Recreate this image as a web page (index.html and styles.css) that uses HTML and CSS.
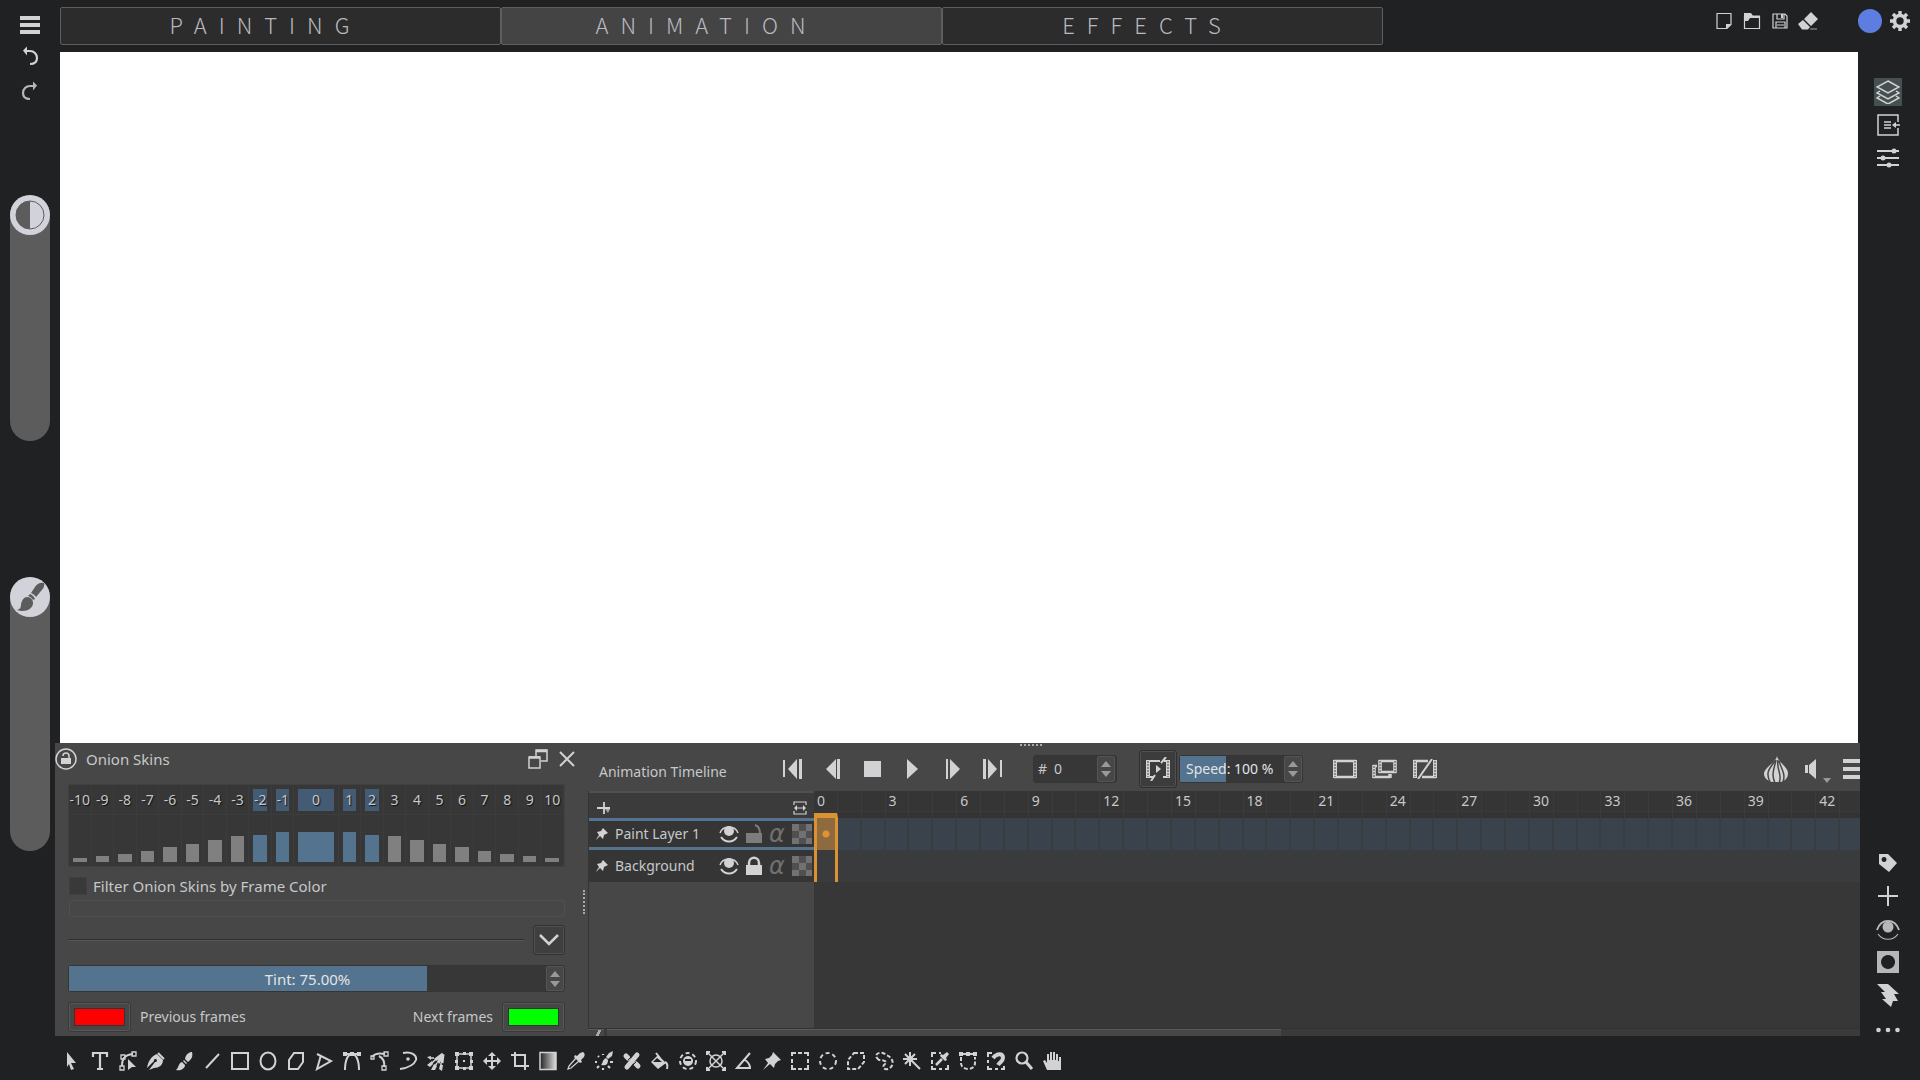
FILE: index.html
```html
<!DOCTYPE html>
<html lang="en">
<head>
    <meta charset="UTF-8">
    <meta name="viewport" content="width=device-width, initial-scale=1.0">
    <title>Animation Workspace</title>
    <link rel="stylesheet" href="styles.css">
</head>
<body>
<div class="app">

    <!-- Left rail: menu, history, opacity and size sliders -->
    <aside class="left-rail">
        <button class="icon-btn" aria-label="Menu">
            <svg viewBox="0 0 20 20"><path class="solid" d="M0 2h20v4H0zM0 9h20v4H0zM0 16h20v4H0z"/></svg>
        </button>
        <div class="history">
            <button class="icon-btn" aria-label="Undo">
                <svg viewBox="0 0 20 20"><path d="M6 5h4c4 0 7 3 7 7s-3 6-7 6" stroke-width="2.2"/><path class="solid" d="M3 4.500l4-4v9z"/></svg>
            </button>
            <button class="icon-btn dim" aria-label="Redo">
                <svg viewBox="0 0 20 20"><path d="M13 5h-3c-4 0-7 3-7 7s3 6 7 6" stroke-width="2.200"/><path class="solid" d="M17 4.500l-4-4v9z"/></svg>
            </button>
        </div>
        <div class="slider opacity">
            <input type="range" min="0" max="100" value="100" aria-label="Opacity">
            <svg viewBox="0 0 40 40"><circle cx="20" cy="20" r="14" fill="#d2d3da" stroke="#5c5c5c" stroke-width="1"/><path d="M20 6a14 14 0 0 0 0 28z" fill="#5c5c5c" stroke="none"/></svg>
        </div>
        <div class="slider size">
            <input type="range" min="0" max="100" value="100" aria-label="Brush size">
            <svg viewBox="0 0 40 40"><path d="M34 6c-4-1-7 1-9 4l-4 6c2 1 4 2 5 4l5-6c2-2 4-5 3-8z"/><path d="M20 17c3 1 4 3 5 5l-2 1c-1-2-2-3-5-4z"/><path d="M17 20c4 0 6 3 6 6 0 6-8 10-16 7 3-1 4-2 4-6 1-4 3-7 6-7z"/></svg>
        </div>
    </aside>

    <!-- Workspace tabs and document actions -->
    <header class="top-bar">
        <nav class="tabs">
            <button class="tab">PAINTING</button>
            <button class="tab active">ANIMATION</button>
            <button class="tab">EFFECTS</button>
        </nav>
        <div class="doc-actions">
            <button class="icon-btn" aria-label="New">
                <svg viewBox="0 0 20 20"><path d="M3 2.500h14v11l-4 4H3z" stroke-width="1.200"/><path class="solid" d="M12 18v-5h5z"/></svg>
            </button>
            <button class="icon-btn" aria-label="Open">
                <svg viewBox="0 0 20 20"><path d="M2.500 5v12.500h15V5z" stroke-width="1.200"/><path class="solid" d="M2 2h7l2 3h7v2H8l-2 3H2z"/></svg>
            </button>
            <button class="icon-btn" aria-label="Save">
                <svg viewBox="0 0 20 20" stroke-width="1.200"><path d="M3 3h12l2 2v12H3zM6 17v-6h9v6M7 3v5h7V3M7 14h7"/><path class="solid" d="M11 3h2v4h-2z"/></svg>
            </button>
            <button class="icon-btn" aria-label="Clear">
                <svg viewBox="0 0 20 20"><path class="solid" d="M13 1l7 7-7 7-7-7zM5 9l7 7-2 2.500H4L0 13z"/><path d="M12 18h7" stroke-width="1.500" opacity=".5"/></svg>
            </button>
        </div>
        <button class="color-dot" aria-label="Foreground color"></button>
        <button class="icon-btn" aria-label="Settings">
            <svg viewBox="0 0 20 20"><circle cx="10" cy="10" r="5.500" stroke-width="3.600"/><path d="M10 0v4M10 16v4M0 10h4M16 10h4M3 3l2.500 2.500M14.500 14.500L17 17M17 3l-2.500 2.500M5.500 14.500L3 17" stroke-width="3.400"/></svg>
        </button>
    </header>

    <main class="canvas"></main>

    <section class="dockers">
        <!-- Onion skins -->
        <div class="onion">
            <div class="docker-title">
                <button class="icon-btn lock" aria-label="Lock docker">
                    <svg viewBox="0 0 22 22"><circle cx="11" cy="11" r="10" stroke-width="1.500"/><path class="solid" d="M6 10h10v6H6z"/><path d="M8 8c0-4 6-4 6 0v2" stroke-width="1.500"/></svg>
                </button>
                <span class="title-text">Onion Skins</span>
                <button class="icon-btn" aria-label="Float docker">
                    <svg viewBox="0 0 20 20" stroke-width="1.500"><path d="M1 8h11v11H1zM8 7V1h11v11h-6"/><path d="M1 8.500h11M8 2h11" stroke-width="2.500"/></svg>
                </button>
                <button class="icon-btn" aria-label="Close docker">
                    <svg viewBox="0 0 20 20"><path d="M3 3l14 14M17 3L3 17" stroke-width="2"/></svg>
                </button>
            </div>
            <div class="skins" id="skins"></div>
            <label class="filter"><input type="checkbox">Filter Onion Skins by Frame Color</label>
            <div class="color-filter"></div>
            <div class="divider">
                <hr>
                <button class="fold" aria-label="Show tint options">
                    <svg viewBox="0 0 20 20"><path d="M1 5l9 9 9-9" stroke-width="2.500"/></svg>
                </button>
            </div>
            <div class="spin tint">
                <input type="text" value="Tint: 75.00%" aria-label="Tint">
                <span class="arrows"><button class="up" aria-label="More tint"></button><button class="down" aria-label="Less tint"></button></span>
            </div>
            <div class="swatches">
                <button class="swatch" id="prev" aria-label="Previous frames color"><span class="red"></span></button>
                <label for="prev">Previous frames</label>
                <label for="next" class="next">Next frames</label>
                <button class="swatch" id="next" aria-label="Next frames color"><span class="green"></span></button>
            </div>
        </div>

        <div class="splitter"><i></i></div>

        <!-- Timeline -->
        <div class="timeline">
            <i class="grip"></i>
            <div class="timeline-bar">
                <span class="timeline-name">Animation Timeline</span>
                <div class="transport">
                    <button class="icon-btn" aria-label="First frame"><svg viewBox="0 0 20 20"><path class="solid" d="M0 1h2v17H0zM14 0v20L5 10zM16 0h3v20h-3z"/></svg></button>
                    <button class="icon-btn" aria-label="Previous frame"><svg viewBox="0 0 20 20"><path class="solid" d="M13 0v20L3 10zM14 0h3v20h-3z"/></svg></button>
                    <button class="icon-btn" aria-label="Stop"><svg viewBox="0 0 20 20"><path class="solid" d="M1 2h17v16H1z"/></svg></button>
                    <button class="icon-btn" aria-label="Play"><svg viewBox="0 0 20 20"><path class="solid" d="M4 0l11 10L4 20z"/></svg></button>
                    <button class="icon-btn" aria-label="Next frame"><svg viewBox="0 0 20 20"><path class="solid" d="M7 0v20l10-10zM3 0h2v20H3z"/></svg></button>
                    <button class="icon-btn" aria-label="Last frame"><svg viewBox="0 0 20 20"><path class="solid" d="M0 0h3v20H0zM5 0v20l9-10zM17 1h2v17h-2z"/></svg></button>
                </div>
                <div class="spin frame">
                    <label for="frame">#</label>
                    <input type="text" id="frame" value="0">
                    <span class="arrows"><button class="up" aria-label="Next"></button><button class="down" aria-label="Previous"></button></span>
                </div>
                <button class="drop" aria-label="Drop frames">
                    <svg viewBox="0 0 26 24"><path d="M15 4H3v16h5M18 20h5V4h-4" stroke-width="2"/><path d="M3 3v18M23 3v18" stroke-width="4"/><path class="holes" d="M3 4v16M23 4v16"/><path class="solid" d="M11 8l5 4-5 4z"/><path d="M21 0l-5 6M10 18l-4 6" stroke-width="2"/></svg>
                </button>
                <div class="spin speed">
                    <input type="text" value="Speed: 100 %" aria-label="Speed">
                    <span class="arrows"><button class="up" aria-label="Faster"></button><button class="down" aria-label="Slower"></button></span>
                </div>
                <div class="frame-tools">
                    <button class="icon-btn wide" aria-label="Add blank frame"><svg viewBox="0 0 26 20"><path d="M3 2h20v16H3z" stroke-width="2.500"/><path d="M3 1v18M23 1v18" stroke-width="4"/><path class="holes" d="M3 2v16M23 2v16"/></svg></button>
                    <button class="icon-btn wide" aria-label="Add duplicate frame"><svg viewBox="0 0 26 20"><path d="M8 2h15v11H8z" stroke-width="2.500"/><path d="M8 1v13M23 1v13M2 6v13M18 15v4" stroke-width="3.500"/><path d="M5 7H2v11h16" stroke-width="2.500"/><path class="holes" d="M8 2v11M23 2v11M2 7v11"/></svg></button>
                    <button class="icon-btn wide" aria-label="Remove frame"><svg viewBox="0 0 26 20"><path d="M16 2H3v16M10 18h13V3" stroke-width="2.500"/><path d="M3 1v18M23 1v18" stroke-width="4"/><path class="holes" d="M3 2v16M23 2v16"/><path d="M20 0L6 20" stroke-width="2"/></svg></button>
                </div>
                <div class="timeline-options">
                    <button class="icon-btn onion-btn" aria-label="Onion skin menu"><svg viewBox="0 0 26 26"><path class="solid" d="M14 0c1 6 11 11 11 17 0 5-3 8-7 9H9c-4-1-8-4-8-8C1 11 13 7 14 0z"/><path class="gaps" d="M12 5C7 12 2 16 7 26M13 4c-2 9-5 15-1 23M15 4c-2 9 5 15 1 23M16 5c2 7 7 13 4 21"/></svg></button>
                    <button class="icon-btn" aria-label="Audio"><svg viewBox="0 0 20 20"><path class="solid" d="M2 6h3v8H2zM6 6l7-6v20l-7-6z"/></svg></button>
                    <span class="caret"></span>
                    <button class="icon-btn more" aria-label="Timeline settings"><svg viewBox="0 0 20 20"><path class="solid" d="M0 0h20v4H0zM0 8h20v4H0zM0 16h20v4H0z"/></svg></button>
                </div>
            </div>

            <div class="tracks">
                <div class="track-heads">
                    <div class="track-tools">
                        <button class="icon-btn small" aria-label="Add layer"><svg viewBox="0 0 14 14"><path d="M7 1v12M0 7h13" stroke-width="1.800"/><path class="solid" d="M8 8h5l-2 4z" opacity=".7"/></svg></button>
                        <button class="icon-btn small" aria-label="Zoom timeline"><svg viewBox="0 0 14 14" stroke-width="1.200"><path d="M1 4V1h12v3M1 10v3h12v-3M4 7h6"/><path class="solid" d="M4 4v6L1 7zM10 4v6l3-3z"/></svg></button>
                    </div>
                    <div class="track-head selected">
                        <svg class="pin" viewBox="0 0 12 12"><path class="solid" d="M7 0l5 5-2 1-2 1-1 4-3-3-3 3-1 1 1-2 2-3-2-3 4-1z"/></svg>
                        <span class="track-name">Paint Layer 1</span>
                        <svg viewBox="0 0 20 20"><circle class="solid" cx="10" cy="7" r="5"/><path d="M1 9c3-8 15-8 18 0" stroke-width="1.500"/><path d="M2 13c4 6 12 6 16 0" stroke-width="2"/></svg>
                        <svg class="faint" viewBox="0 0 20 20"><path class="solid" d="M2 9h16v10H2z"/><path d="M11 1c4 1 5 4 5 9" stroke-width="2"/></svg>
                        <span class="alpha">α</span>
                        <i class="checker"></i>
                    </div>
                    <div class="track-head">
                        <svg class="pin" viewBox="0 0 12 12"><path class="solid" d="M7 0l5 5-2 1-2 1-1 4-3-3-3 3-1 1 1-2 2-3-2-3 4-1z"/></svg>
                        <span class="track-name">Background</span>
                        <svg viewBox="0 0 20 20"><circle class="solid" cx="10" cy="7" r="5"/><path d="M1 9c3-8 15-8 18 0" stroke-width="1.500"/><path d="M2 13c4 6 12 6 16 0" stroke-width="2"/></svg>
                        <svg viewBox="0 0 20 20"><path class="solid" d="M2 9h16v10H2z"/><path d="M5 10V7c0-7 10-7 10 0v3" stroke-width="2.500"/></svg>
                        <span class="alpha">α</span>
                        <i class="checker"></i>
                    </div>
                </div>
                <div class="frames">
                    <div class="ruler" id="ruler"></div>
                    <div class="frame-row keyed" id="paintFrames"></div>
                    <div class="frame-row" id="backgroundFrames"></div>
                </div>
            </div>
            <div class="scrollbar"><span class="scroll-left"></span><span class="scroll-thumb"></span></div>
        </div>
    </section>

    <!-- Docker toggles and layer actions -->
    <aside class="right-rail">
        <div class="rail-group">
            <button class="icon-btn active" aria-label="Layers"><svg viewBox="0 0 24 24" stroke-width="1.500"><path d="M12 1l11 6-11 6L1 7zM4 11l-3 2 11 6 11-6-3-2M4 16l-3 2 11 6 11-6-3-2"/></svg></button>
            <button class="icon-btn" aria-label="Tool options"><svg viewBox="0 0 24 24" stroke-width="1.500"><path d="M22 9V2H2v20h20v-7M8 9h7M8 12h7M8 15h7M17 12h7"/><path class="solid" d="M16 12l4-3v6z"/></svg></button>
            <button class="icon-btn" aria-label="Adjustments"><svg viewBox="0 0 24 24" stroke-width="2"><path d="M1 5h22M1 12h22M1 19h22"/><circle class="solid" cx="18" cy="5" r="2.500"/><circle class="solid" cx="7" cy="12" r="2.500"/><circle class="solid" cx="13" cy="19" r="2.500"/></svg></button>
        </div>
        <div class="rail-group">
            <button class="icon-btn" aria-label="Tag"><svg viewBox="0 0 24 24"><path class="solid" fill-rule="evenodd" d="M3 3h9l9 9-8 9L3 13zM8 6a2.500 2.500 0 1 0 .1 0z"/></svg></button>
            <button class="icon-btn" aria-label="Add layer"><svg viewBox="0 0 24 24"><path d="M12 2v20M2 12h20" stroke-width="2"/></svg></button>
            <button class="icon-btn dim" aria-label="Visibility"><svg viewBox="0 0 24 24"><circle class="solid" cx="12" cy="10" r="5.500"/><path d="M1 13C5 1 19 1 23 13" stroke-width="2"/><path d="M2 17c5 7 15 7 20 0" stroke-width="1.200"/></svg></button>
            <button class="icon-btn dim" aria-label="Mask"><svg viewBox="0 0 24 24"><path class="solid" fill-rule="evenodd" d="M1 1h22v22H1zM12 5a7 7 0 1 0 .1 0z"/></svg></button>
            <button class="icon-btn" aria-label="Quick action"><svg viewBox="0 0 24 24"><path class="solid" d="M1 1h11l11 10h-5l4 7h-5l-2 6-9-8h4l-5-7h4z"/></svg></button>
            <button class="icon-btn" aria-label="More"><svg viewBox="0 0 24 24"><circle class="solid" cx="2.500" cy="14" r="2.300"/><circle class="solid" cx="12" cy="14" r="2.300"/><circle class="solid" cx="21.500" cy="14" r="2.300"/></svg></button>
        </div>
    </aside>

    <!-- Toolbox -->
    <footer class="toolbox">
        <button aria-label="Select shapes"><svg viewBox="0 0 20 20"><path class="solid" d="M5 1l9 11H9l3 6-3 1-2-6-2 3z"/></svg></button>
        <button aria-label="Text"><svg viewBox="0 0 20 20"><path d="M3 6V2h14v4M10 2v16M7 18h6" stroke-width="2.200"/></svg></button>
        <button aria-label="Edit shapes"><svg viewBox="0 0 20 20"><path d="M4 15C4 7 7 4 15 3" stroke-width="2"/><path d="M2 15h4v4H2zM14 1h4v4h-4zM3 4h4v4H3z" stroke-width="1.300"/><path class="solid" d="M10 8l8 8h-4l-4 3z"/></svg></button>
        <button aria-label="Calligraphy"><svg viewBox="0 0 20 20"><path class="solid" fill-rule="evenodd" d="M11 3l6 6c0 5-4 8-9 8l-5 2 6-8a1.500 1.500 0 1 0-1-1l-7 7c1-6 4-12 10-14z"/><path d="M12 2l6 6" stroke-width="2"/></svg></button>
        <button aria-label="Freehand brush"><svg viewBox="0 0 20 20"><path class="solid" d="M18 1c-3 0-6 2-7 7l3 3c4-3 5-6 4-10zM10 9l3 3-1 1-3-3zM8 11l3 3c0 4-5 6-9 5 3-2 2-7 6-8z"/></svg></button>
        <button aria-label="Line"><svg viewBox="0 0 20 20"><path d="M4 17L17 3" stroke-width="2"/></svg></button>
        <button aria-label="Rectangle"><svg viewBox="0 0 20 20"><path d="M2 2h16v16H2z" stroke-width="2"/></svg></button>
        <button aria-label="Ellipse"><svg viewBox="0 0 20 20"><ellipse cx="10" cy="10" rx="7.500" ry="8.500" stroke-width="2"/></svg></button>
        <button aria-label="Polygon"><svg viewBox="0 0 20 20"><path d="M8 2h9v9l-5 7H3V9z" stroke-width="2"/></svg></button>
        <button aria-label="Polyline"><svg viewBox="0 0 20 20"><path d="M3 3l14 7L3 18l4-14" stroke-width="2"/></svg></button>
        <button aria-label="Bezier curve"><svg viewBox="0 0 20 20"><path d="M3 19c0-10 3-16 7-16s7 6 7 16M2 3h16" stroke-width="2"/><path class="solid" d="M1 1h4v4H1zM8 1h4v4H8zM15 1h4v4h-4z"/></svg></button>
        <button aria-label="Freehand path"><svg viewBox="0 0 20 20"><path d="M2 6c3-4 8-4 13-3M14 16c1-6-1-9-5-11" stroke-width="2"/><path d="M14 1h4v4h-4zM12 15h4v4h-4zM1 5h3v3H1z" stroke-width="1.300"/></svg></button>
        <button aria-label="Dynamic brush"><svg viewBox="0 0 20 20"><path d="M5 2c8-2 14 2 13 7-2 5-9 8-16 9" stroke-width="2"/><circle class="solid" cx="10" cy="8" r="1.800"/></svg></button>
        <button aria-label="Multibrush"><svg viewBox="0 0 20 20"><path d="M17 3L9 9M17 3l-5 9M17 3l-1 9" stroke-width="3"/><path d="M9 9l-3 3M11 12l-2 3M15 12v3M8 7H5" stroke-width="1.500"/><path class="solid" d="M1 6l4-1v4zM1 14l5-4 1 3-3 3zM5 19l3-6 3 2-2 4zM14 14h3l-1 6-3-2z"/></svg></button>
        <button aria-label="Transform"><svg viewBox="0 0 20 20"><path d="M3 3h14v14H3z" stroke-width="1.500"/><path class="solid" d="M1 1h4v4H1zM15 1h4v4h-4zM1 15h4v4H1zM15 15h4v4h-4zM9 1h3v3H9zM9 9h2v2H9zM9 16h3v3H9zM1 9h3v3H1zM16 9h3v3h-3z"/></svg></button>
        <button aria-label="Move"><svg viewBox="0 0 20 20"><path d="M10 3v14M3 10h14" stroke-width="2"/><path class="solid" d="M10 1l4 4H6zM10 19l4-4H6zM1 10l4-4v8zM19 10l-4-4v8z"/></svg></button>
        <button aria-label="Crop"><svg viewBox="0 0 20 20"><path d="M5 1v14h14M1 4h14v15" stroke-width="2"/></svg></button>
        <button aria-label="Gradient"><svg viewBox="0 0 20 20"><defs><linearGradient id="fade"><stop offset="0" stop-color="#222"/><stop offset="1" stop-color="#ddd"/></linearGradient></defs><path d="M2 1.500h16v17H2z" fill="url(#fade)" stroke-width="1.500"/></svg></button>
        <button aria-label="Color sampler"><svg viewBox="0 0 20 20"><path d="M10 7l-7 8-1 3 3-1 8-7" stroke-width="1.300"/><path class="solid" d="M17 1c2 1 2 3 1 5l-3 3 1 2-2 1-6-6 1-2 2 1 3-3z"/></svg></button>
        <button aria-label="Colorize mask"><svg viewBox="0 0 20 20"><path class="solid" d="M19 0l-1 5-4 3-2-2 3-4zM12 7l2 2c0 5-3 6-7 5 2-2 1-5 5-7z"/><path d="M1 11h2M4 5l1 1M9 3v1M3 17l2-2M9 17v2M14 15l2 2M16 11h3" stroke-width="2.200"/></svg></button>
        <button aria-label="Smart patch"><svg viewBox="0 0 20 20"><path d="M5 16L15 4" stroke-width="5" stroke-linecap="round"/><path d="M4 5l2 2M14 13l2 2" stroke-width="5" stroke-linecap="round"/><path d="M6 9l6-6M8 17l6-6" stroke="#202123" stroke-width="1"/></svg></button>
        <button aria-label="Fill"><svg viewBox="0 0 20 20"><path class="solid" fill-rule="evenodd" d="M8 4l8 8-8 6-7-7zM7 7l-4 4h9z"/><path d="M6 2l4 5M15 11c2 1 3 3 2 7" stroke-width="2"/></svg></button>
        <button aria-label="Enclose and fill"><svg viewBox="0 0 20 20"><circle cx="10" cy="10" r="8" stroke-width="2" stroke-dasharray="4 3"/><path class="solid" fill-rule="evenodd" d="M10 5a5 5 0 1 0 .1 0zM7 8h6v2H7z"/></svg></button>
        <button aria-label="Assistants"><svg viewBox="0 0 20 20"><circle cx="10" cy="10" r="6" stroke-width="1.500"/><path d="M2 2l16 16M18 2L2 18" stroke-width="1.500"/><path d="M1 4V1h3M16 1h3v3M1 16v3h3M19 16v3h-3" stroke-width="2"/></svg></button>
        <button aria-label="Measure"><svg viewBox="0 0 20 20"><path d="M16 2L3 17h13c0-4-2-6-5-8" stroke-width="2"/></svg></button>
        <button aria-label="Reference images"><svg viewBox="0 0 20 20"><path class="solid" d="M11 1l8 8-3 1-3 3-1 4-4-4-7 6 5-7-3-4 4-1 3-3z"/></svg></button>
        <button aria-label="Rectangular selection"><svg viewBox="0 0 20 20"><path d="M2 5V2h4M8 2h4M14 2h4v3M18 8v4M18 14v4h-4M12 18H8M6 18H2v-4M2 12V8" stroke-width="2"/></svg></button>
        <button aria-label="Elliptical selection"><svg viewBox="0 0 20 20"><circle cx="10" cy="10" r="8" stroke-width="2" stroke-dasharray="4 3"/></svg></button>
        <button aria-label="Polygonal selection"><svg viewBox="0 0 20 20"><path d="M8 2h10v9l-6 7H2V9z" stroke-width="2" stroke-dasharray="4 2"/></svg></button>
        <button aria-label="Freehand selection"><svg viewBox="0 0 20 20"><path d="M5 9c-8-6 3-10 7-5 9 3 8 12 2 14-5 1-6-3-3-5s0-4-6-4z" stroke-width="2" stroke-dasharray="4 2"/></svg></button>
        <button aria-label="Contiguous selection"><svg viewBox="0 0 20 20"><path d="M8 1v14M1 8h14M3 3l15 15M13 3L3 13" stroke-width="2"/><circle class="solid" cx="8" cy="8" r="3"/></svg></button>
        <button aria-label="Similar color selection"><svg viewBox="0 0 20 20"><path d="M2 6V2h4M9 2h2M2 9v4M2 15v3h4M9 18h3M15 18h3v-4" stroke-width="2"/><path d="M12 8l-6 6" stroke-width="2.500"/><path class="solid" d="M17 1l2 2-3 4 1 2-2 1-5-5 1-2 2 1z"/></svg></button>
        <button aria-label="Bezier selection"><svg viewBox="0 0 20 20"><path d="M3 6v6c0 8 14 8 14 0V6" stroke-width="2" stroke-dasharray="4 2"/><path d="M2 3h16" stroke-width="2"/><path class="solid" d="M1 1h4v4H1zM8 1h4v4H8zM15 1h4v4h-4z"/></svg></button>
        <button aria-label="Magnetic selection"><svg viewBox="0 0 20 20"><path d="M6 2H2v4M2 9v3M2 15v3h4M9 18h3M15 18h3v-3" stroke-width="2"/><path d="M7 7c4-5 10-5 10 0 0 3-3 4-5 7" stroke-width="4"/></svg></button>
        <button aria-label="Zoom"><svg viewBox="0 0 20 20"><circle cx="8" cy="7" r="5.500" stroke-width="2.200"/><path d="M12 11l6 7" stroke-width="3"/></svg></button>
        <button aria-label="Pan"><svg viewBox="0 0 20 20"><path class="solid" d="M5 19l-4-9 2-1 2 3V3h2v6h1V1h2v8h1V1h2v8h1V3h2v7h1V6h2v13z"/></svg></button>
    </footer>
</div>

<script>
    // Onion skin strengths, frame -10 to 10 (px)
    const strengths = [4, 6, 8, 11, 15, 18, 22, 26, 27, 30, 30, 30, 27, 26, 22, 18, 15, 11, 8, 6, 4];
    const skins = document.getElementById('skins');
    strengths.forEach((height, i) => {
        const offset = i - 10;
        const cell = document.createElement('div');
        cell.className = 'skin';
        if (Math.abs(offset) <= 2) cell.classList.add('on');
        if (offset === 0) cell.classList.add('current');
        cell.innerHTML = `<button class="skin-label">${offset}</button><div class="skin-level"><i style="height: ${height}px"></i></div>`;
        skins.appendChild(cell);
    });

    // Timeline cells, a number on every third frame
    for (let frame = 0; frame < 44; frame++) {
        const tick = document.createElement('span');
        tick.className = 'tick';
        if (frame % 3 === 0) tick.textContent = frame;
        document.getElementById('ruler').appendChild(tick);
        document.getElementById('paintFrames').appendChild(document.createElement('span'));
        document.getElementById('backgroundFrames').appendChild(document.createElement('span'));
    }
</script>
</body>
</html>
```
FILE: styles.css
```css
* {
    box-sizing: border-box;
}

body {
    margin: 0;
    background-color: #202123;
    color: #c6c8ca;
    font-family: "Noto Sans", sans-serif;
    font-size: 14px;
    line-height: 20px;
}

button,
input {
    margin: 0;
    padding: 0;
    border: none;
    background: none;
    color: inherit;
    font: inherit;
}

svg {
    display: block;
    width: 20px;
    height: 20px;
    flex: none;
    fill: none;
    stroke: #d2d2d4;
}

svg .solid {
    fill: #d2d2d4;
    stroke: none;
}

.holes {
    stroke: #474747;
    stroke-width: 1;
    stroke-dasharray: 2 1;
}

.gaps {
    stroke: #474747;
    stroke-width: 1.5;
}

.app {
    display: grid;
    grid-template-columns: 55px 1fr 60px;
    grid-template-rows: 52px 1fr auto 44px;
    height: 100vh;
    overflow: hidden;
}

.icon-btn {
    display: flex;
    flex: none;
    align-items: center;
    justify-content: center;
    width: 20px;
    height: 28px;
}

.dim {
    opacity: 0.85;
}

/* Left rail */
.left-rail {
    grid-column: 1;
    grid-row: 1 / 5;
    display: flex;
    flex-direction: column;
    padding: 10px 5px 0 10px;
}

.left-rail .icon-btn {
    width: 40px;
}

.history {
    display: flex;
    flex-direction: column;
    gap: 7px;
    margin-top: 4px;
}

.slider {
    position: relative;
    border-radius: 20px;
    background-color: #5c5c5c;
}

.opacity {
    height: 246px;
    margin-top: 90px;
}

.size {
    height: 274px;
    margin-top: 136px;
}

.slider input {
    display: block;
    width: 40px;
    height: 100%;
    appearance: none;
    writing-mode: vertical-lr;
    direction: rtl;
}

.slider input::-webkit-slider-thumb {
    appearance: none;
    width: 40px;
    height: 40px;
    border-radius: 50%;
    background-color: #d2d3da;
}

.slider svg {
    position: absolute;
    top: 0;
    left: 0;
    width: 40px;
    height: 40px;
    pointer-events: none;
}

.size svg {
    stroke: none;
    fill: #5c5c5c;
}

/* Top bar */
.top-bar {
    grid-column: 2 / 4;
    display: flex;
    align-items: flex-start;
    padding: 7px 10px 0 5px;
}

.tabs {
    display: flex;
    flex: 0 1 1323px;
}

.tab {
    flex: 1;
    height: 38px;
    padding-right: 30px;
    border: 1px solid #5e5e5e;
    border-radius: 2px;
    background-color: #2c2c2c;
    color: #b9bac1;
    font-family: "Noto Sans CJK SC", "Noto Sans", sans-serif;
    font-size: 22px;
    font-weight: 300;
    line-height: 32px;
    letter-spacing: 12px;
    padding-bottom: 4px;
}

.tab.active {
    background-color: #444;
}

.doc-actions {
    display: flex;
    gap: 8px;
    margin-left: auto;
}

.color-dot {
    width: 24px;
    height: 24px;
    margin: 2px 8px 0 40px;
    border-radius: 50%;
    background-color: #5d7ee0;
}

/* Canvas */
.canvas {
    grid-column: 2;
    margin: 0 2px 0 5px;
    background-color: #fff;
}

/* Dockers */
.dockers {
    grid-column: 2;
    display: grid;
    grid-template-columns: minmax(420px, 525px) 8px 1fr;
    min-width: 0;
    background-color: #474747;
}

.onion {
    padding: 0 15px 4px 13px;
}

.docker-title {
    display: flex;
    align-items: center;
    gap: 9px;
    height: 32px;
    margin: 0 -12px 9px -13px;
}

.title-text {
    flex: 1;
}

.title-text,
.filter,
.tint {
    font-size: 15px;
}

.lock,
.lock svg {
    width: 22px;
}

.lock svg {
    height: 22px;
}

.skins {
    display: flex;
    height: 83px;
    border: 1px solid #404040;
    background-color: #373737;
}

.skin {
    display: flex;
    flex: 1;
    flex-direction: column;
    min-width: 0;
    border-right: 1px solid #3c3c3c;
}

.skin.current {
    flex: 2;
}

.skin-label {
    display: flex;
    justify-content: center;
    height: 22px;
    margin: 4px 4px 3px;
    line-height: 22px;
    text-shadow: 1px 1px 1px #111;
}

.on .skin-label {
    background-color: #445b74;
}

.skin-level {
    display: flex;
    flex: 1;
    align-items: flex-end;
    padding: 0 4px 4px;
    border-top: 1px solid #3c3c3c;
}

.skin-level i {
    flex: 1;
    background-color: #808080;
}

.on .skin-level i {
    background-color: #53738f;
}

.filter {
    display: flex;
    align-items: center;
    gap: 6px;
    height: 20px;
    margin: 9px 0 4px 1px;
}

.filter input {
    width: 18px;
    height: 18px;
    appearance: none;
    border: 1px solid #404040;
    background-color: #393939;
}

.color-filter {
    height: 17px;
    margin-left: 1px;
    border: 1px solid #505050;
    border-radius: 3px;
}

.divider {
    display: flex;
    align-items: center;
    gap: 8px;
    margin-top: 8px;
}

.divider hr {
    flex: 1;
    margin: 0;
    border: none;
    border-top: 1px solid #303030;
    border-bottom: 1px solid #555;
}

.fold {
    display: flex;
    align-items: center;
    justify-content: center;
    width: 32px;
    height: 30px;
    border: 1px solid #333;
    border-radius: 3px;
    background-color: #3f3f3f;
    box-shadow: inset 0 0 0 1px #505050;
}

.spin {
    display: flex;
    border: 1px solid #353535;
    border-radius: 3px;
    background-color: #373737;
}

.spin input {
    flex: 1;
    min-width: 0;
}

.arrows {
    display: flex;
    flex: none;
    flex-direction: column;
    align-items: center;
    justify-content: center;
    gap: 4px;
    width: 18px;
    border: 1px solid #555;
    border-radius: 2px;
    background-color: #474747;
}

.arrows button,
.caret {
    width: 0;
    height: 0;
    border-left: 5px solid transparent;
    border-right: 5px solid transparent;
}

.arrows .up {
    border-bottom: 6px solid #999;
}

.arrows .down {
    border-top: 6px solid #999;
}

.tint {
    height: 27px;
    margin: 10px 0;
}

.tint input {
    background-image: linear-gradient(to right, #53738f 75%, #373737 75%);
    color: #e2e4e6;
    text-align: center;
}

.swatches {
    display: flex;
    align-items: center;
    gap: 9px;
}

.swatch {
    width: 63px;
    height: 30px;
    padding: 5px;
    border: 1px solid #383838;
    border-radius: 3px;
    box-shadow: inset 0 0 0 1px #585858;
}

.swatch span {
    display: block;
    height: 18px;
    border: 1px solid #333;
}

.red {
    background-color: #f00;
}

.green {
    background-color: #0f0;
}

.next {
    margin-left: auto;
}

.splitter {
    display: flex;
    align-items: center;
    justify-content: center;
}

.splitter i {
    height: 24px;
    margin-top: 24px;
    border-left: 2px dotted #aaa;
}

/* Timeline */
.timeline {
    position: relative;
    display: flex;
    flex-direction: column;
    min-width: 0;
    overflow: hidden;
}

.grip {
    position: absolute;
    top: 1px;
    left: 34%;
    width: 22px;
    border-top: 2px dotted #aaa;
}

.timeline-bar {
    display: flex;
    align-items: center;
    height: 48px;
    padding: 4px 0 0 11px;
}

.timeline-name {
    width: 184px;
    padding-top: 5px;
}

.transport {
    display: flex;
    gap: 20px;
}

.frame {
    width: 84px;
    height: 28px;
    margin: 0 22px 0 30px;
    padding: 0 1px 0 4px;
    line-height: 26px;
}

.frame label {
    width: 16px;
}

.drop {
    display: flex;
    align-items: center;
    justify-content: center;
    width: 38px;
    height: 38px;
    border: 1px solid #2f2f2f;
    border-radius: 3px;
    background-color: #3c3c3c;
    box-shadow: inset 0 0 0 1px #505050;
}

.drop svg {
    width: 26px;
    height: 24px;
}

.speed {
    width: 124px;
    height: 28px;
    margin: 0 29px 0 2px;
}

.speed input {
    padding-left: 6px;
    background-image: linear-gradient(to right, #53738f 44%, #373737 44%);
    color: #e2e4e6;
}

.frame-tools {
    display: flex;
    gap: 14px;
}

.wide,
.wide svg,
.onion-btn,
.onion-btn svg {
    width: 26px;
}

.onion-btn svg {
    height: 26px;
}

.timeline-options {
    display: flex;
    align-items: center;
    gap: 14px;
    margin: 0 -3px 0 auto;
}

.caret {
    margin: 22px -2px 0 -14px;
    border-left-width: 4px;
    border-right-width: 4px;
    border-top: 5px solid #999;
}

.tracks {
    display: grid;
    flex: 1;
    grid-template-columns: 226px 1fr;
}

.track-heads {
    border-left: 1px solid #353535;
}

.track-tools {
    display: flex;
    align-items: center;
    justify-content: space-between;
    height: 27px;
    padding: 4px 7px 0 8px;
    border-top: 2px solid #505050;
    background-color: #3b3b3b;
}

.small,
.small svg {
    width: 14px;
    height: 14px;
}

.track-head {
    display: flex;
    align-items: center;
    gap: 5px;
    height: 32px;
    padding: 0 2px 0 7px;
    background-color: #353535;
}

.track-head.selected {
    border-top: 3px solid #53738f;
    border-bottom: 3px solid #53738f;
}

.track-head .pin {
    width: 12px;
    height: 12px;
}

.track-name {
    flex: 1;
    padding-left: 2px;
    white-space: nowrap;
}

.faint {
    opacity: 0.45;
}

.alpha {
    width: 18px;
    color: #707070;
    font-family: "DejaVu Sans", sans-serif;
    font-size: 24px;
    font-style: italic;
}

.checker {
    width: 20px;
    height: 20px;
    background: repeating-conic-gradient(#505050 0% 25%, #727272 0% 50%) 0 0 / 14px 14px;
}

.frames {
    min-width: 0;
    overflow: hidden;
    background-color: #373737;
}

/* One grid for ruler and rows, the last frame runs off the edge */
.ruler,
.frame-row {
    display: grid;
    grid-template-columns: repeat(44, minmax(0, 1fr));
    width: calc(100% + 4px);
}

.ruler {
    height: 27px;
    background: linear-gradient(#353535 20px, #3a3a3a 20px, #333 22px);
}

.tick {
    padding-left: 3px;
    border-right: 1px solid #3b3b3b;
}

.tick:first-child {
    border-bottom: 5px solid #da9233;
}

.frame-row {
    height: 32px;
    background-color: #3a3b3c;
}

.keyed span {
    border-right: 2px solid #393d40;
    background-color: #3a434b;
}

.frame-row span:first-child {
    border: solid #da9233;
    border-width: 0 3px;
}

.keyed span:first-child {
    background: radial-gradient(circle, #e09430 3px, #8d6b3f 4px);
}

.scrollbar {
    display: flex;
    gap: 3px;
    height: 8px;
    border-top: 1px solid #333;
    background-color: #3a3a3a;
}

.scroll-left,
.scroll-thumb {
    border-top: 1px solid #5a5a5a;
    background-color: #474747;
}

.scroll-left {
    width: 16px;
    background: linear-gradient(115deg, #474747 55%, #aaa 56%, #aaa 70%, #474747 71%);
}

.scroll-thumb {
    width: 53%;
}

/* Right rail */
.right-rail {
    grid-column: 3;
    grid-row: 2 / 5;
    display: flex;
    flex-direction: column;
    justify-content: space-between;
    padding: 26px 18px 38px 14px;
}

.rail-group {
    display: flex;
    flex-direction: column;
    gap: 5px;
}

.right-rail .icon-btn {
    width: 28px;
}

.right-rail .active {
    background-color: #475050;
}

.right-rail svg {
    width: 24px;
    height: 24px;
}

/* Toolbox */
.toolbox {
    grid-column: 2;
    display: flex;
    align-items: center;
    padding: 6px 0 0 3px;
}

.toolbox button {
    display: flex;
    align-items: center;
    justify-content: center;
    width: 28px;
    height: 28px;
}
```
